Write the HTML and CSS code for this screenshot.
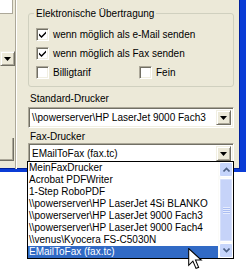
FILE: index.html
```html
<!DOCTYPE html>
<html>
<head>
  <title>Fax-Drucker</title>
  <link rel="stylesheet" href="styles.css">
</head>
<body>
  <div class="screen">
    <div class="window">
      <div class="side">
        <div class="side-box"></div>
        <div class="side-arrow arrow-btn">
          <svg width="7" height="4" viewBox="0 0 7 4"><path d="M0 0h7L3.5 4z" fill="#000"/></svg>
        </div>
        <div class="side-btn"></div>
      </div>
      <div class="sep"></div>

      <div class="panel">
        <div class="group">
          <div class="legend">Elektronische Übertragung</div>
          <label class="check">
            <span class="box">
              <svg width="9" height="9" viewBox="0 0 9 9"><path d="M1 3.5l2.5 2.5L8 1.5v2L3.5 8 1 5.5z" fill="#000"/></svg>
            </span>
            wenn möglich als e-Mail senden
          </label>
          <label class="check">
            <span class="box">
              <svg width="9" height="9" viewBox="0 0 9 9"><path d="M1 3.5l2.5 2.5L8 1.5v2L3.5 8 1 5.5z" fill="#000"/></svg>
            </span>
            wenn möglich als Fax senden
          </label>
          <div class="check-row">
            <label class="check wide"><span class="box"></span>Billigtarif</label>
            <label class="check"><span class="box"></span>Fein</label>
          </div>
        </div>

        <div class="field-label">Standard-Drucker</div>
        <div class="combo">
          <span class="combo-text">\\powerserver\HP LaserJet 9000 Fach3</span>
          <span class="arrow-btn">
            <svg width="7" height="4" viewBox="0 0 7 4"><path d="M0 0h7L3.5 4z" fill="#000"/></svg>
          </span>
        </div>

        <div class="field-label tight">Fax-Drucker</div>
        <div class="combo fax">
          <span class="combo-text">EMailToFax (fax.tc)</span>
          <span class="arrow-btn">
            <svg width="7" height="4" viewBox="0 0 7 4"><path d="M0 0h7L3.5 4z" fill="#000"/></svg>
          </span>
        </div>
      </div>
    </div>

    <!-- open drop-down of the fax combo -->
    <div class="droplist">
      <ul class="items">
        <li>MeinFaxDrucker</li>
        <li>Acrobat PDFWriter</li>
        <li>1-Step RoboPDF</li>
        <li>\\powerserver\HP LaserJet 4Si BLANKO</li>
        <li>\\powerserver\HP LaserJet 9000 Fach3</li>
        <li>\\powerserver\HP LaserJet 9000 Fach4</li>
        <li>\\venus\Kyocera FS-C5030N</li>
        <li class="selected">EMailToFax (fax.tc)</li>
      </ul>
      <div class="scrollbar">
        <div class="sb-btn">
          <svg width="7" height="5" viewBox="0 0 7 5"><path d="M0.5 4.5L3.5 1.5 6.5 4.5" stroke="#4d6185" stroke-width="1.6" fill="none"/></svg>
        </div>
        <div class="sb-thumb">
          <span class="grip"></span>
        </div>
        <div class="sb-btn">
          <svg width="7" height="5" viewBox="0 0 7 5"><path d="M0.5 0.5L3.5 3.5 6.5 0.5" stroke="#4d6185" stroke-width="1.6" fill="none"/></svg>
        </div>
      </div>
    </div>

    <svg class="cursor" width="15" height="23" viewBox="0 0 14 22">
      <path d="M0.5 0.5v16l4-4 3 7 2.5-1-3-7h5.5z" fill="#fff" stroke="#000" stroke-width="1"/>
    </svg>
  </div>
</body>
</html>
```

FILE: styles.css
```css
* {
  margin: 0;
  padding: 0;
  box-sizing: border-box;
}

body {
  background: #fff;
  font-family: "Liberation Sans", Arial, sans-serif;
  font-size: 10px;
  color: #000;
}

.screen {
  position: relative;
  width: 246px;
  height: 277px;
  overflow: hidden;
}

.window {
  display: flex;
  width: 246px;
  height: 172px;
  background: #ece9d8;
  border-right: 6px solid #0a3cd6;
  border-bottom: 3px solid #0a3cd6;
  box-shadow: inset -1px -1px 0 #00209c;
}

/* partially visible left pane */
.side {
  display: flex;
  flex-direction: column;
  width: 15px;
}

.side-box {
  width: 13px;
  height: 14px;
  background: #fff;
  border-right: 1px solid #aca899;
  border-bottom: 1px solid #aca899;
}

.side-arrow {
  margin-top: 37px;
  width: 13px;
  height: 14px;
}

.side-btn {
  margin-top: 72px;
  width: 14px;
  height: 23px;
  border-right: 1px solid #716f64;
  border-bottom: 1px solid #716f64;
  box-shadow: inset -1px -1px 0 #aca899;
}

.sep {
  width: 2px;
  border-left: 1px solid #aca899;
  border-right: 1px solid #fff;
}

.panel {
  flex: 1;
  padding: 8px 0 0 11px;
}

.group {
  position: relative;
  width: 206px;
  height: 74px;
  margin-top: 5px;
  border: 1px solid #d0d0bf;
  border-radius: 3px;
  padding: 14px 0 0 7px;
  display: flex;
  flex-direction: column;
  gap: 6px;
}

.legend {
  position: absolute;
  top: -6px;
  left: 5px;
  padding: 0 2px;
  background: #ece9d8;
  line-height: 11px;
}

.check {
  display: flex;
  align-items: center;
  gap: 4px;
  height: 13px;
}

.check-row {
  display: flex;
}

.check.wide {
  width: 103px;
}

.box {
  display: flex;
  align-items: center;
  justify-content: center;
  width: 13px;
  height: 13px;
  background: #fff;
  border-top: 1px solid #aca899;
  border-left: 1px solid #aca899;
  border-right: 1px solid #fff;
  border-bottom: 1px solid #fff;
  box-shadow: inset 1px 1px 0 #716f64, inset -1px -1px 0 #f1efe2;
}

.field-label {
  margin: 6px 0 0 2px;
  line-height: 12px;
}

.field-label.tight {
  margin-top: 3px;
}

.combo {
  display: flex;
  align-items: center;
  width: 206px;
  height: 21px;
  margin-top: 2px;
  background: #fff;
  border-top: 1px solid #aca899;
  border-left: 1px solid #aca899;
  border-right: 1px solid #fff;
  border-bottom: 1px solid #fff;
  box-shadow: inset 1px 1px 0 #716f64, inset -1px -1px 0 #f1efe2;
  padding: 2px;
}

.combo.fax {
  margin-top: 0;
}

.combo-text {
  flex: 1;
  padding-left: 1px;
  white-space: nowrap;
  overflow: hidden;
}

.arrow-btn {
  display: flex;
  align-items: center;
  justify-content: center;
  width: 15px;
  height: 15px;
  background: #ece9d8;
  border-top: 1px solid #f1efe2;
  border-left: 1px solid #f1efe2;
  border-right: 1px solid #716f64;
  border-bottom: 1px solid #716f64;
  box-shadow: inset 1px 1px 0 #fff, inset -1px -1px 0 #aca899;
}

/* popup list over the window frame */
.droplist {
  position: absolute;
  left: 27px;
  top: 161px;
  width: 207px;
  height: 98px;
  display: flex;
  background: #fff;
  border: 1px solid #000;
}

.items {
  flex: 1;
  list-style: none;
}

.items li {
  height: 12px;
  line-height: 12px;
  padding-left: 1px;
  white-space: nowrap;
}

.items li.selected {
  background: #316ac5;
  color: #fff;
}

.scrollbar {
  width: 15px;
  display: flex;
  flex-direction: column;
  background: #fbfbf8;
  padding: 0 0 0 1px;
}

.sb-btn {
  height: 15px;
  display: flex;
  align-items: center;
  justify-content: center;
  background: #c6d5fb;
  border: 1px solid #fff;
  border-radius: 2px;
}

.sb-thumb {
  flex: 1;
  margin: 1px 0;
  display: flex;
  align-items: center;
  justify-content: center;
  background: #c6d3f9;
  border: 1px solid #fff;
  border-radius: 2px;
  box-shadow: inset 0 0 0 1px #d6e0fb;
}

.grip {
  width: 7px;
  height: 7px;
  background: repeating-linear-gradient(#e6ecfd 0 1px, #aabdf2 1px 2px);
}

.cursor {
  position: absolute;
  left: 188px;
  top: 248px;
}
```
